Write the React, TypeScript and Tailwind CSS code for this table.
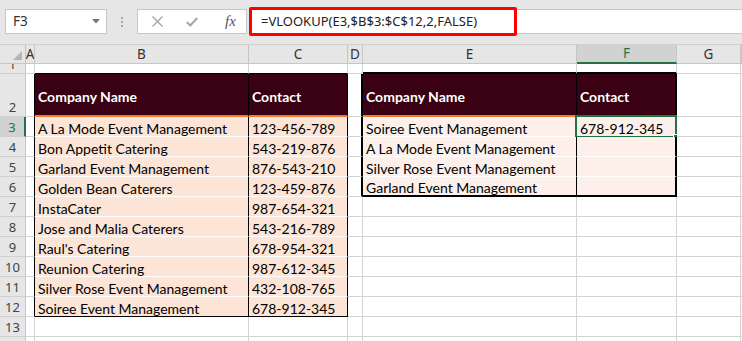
const left = [
  ['A La Mode Event Management', '123-456-789'],
  ['Bon Appetit Catering', '543-219-876'],
  ['Garland Event Management', '876-543-210'],
  ['Golden Bean Caterers', '123-459-876'],
  ['InstaCater', '987-654-321'],
  ['Jose and Malia Caterers', '543-216-789'],
  ["Raul's Catering", '678-954-321'],
  ['Reunion Catering', '987-612-345'],
  ['Silver Rose Event Management', '432-108-765'],
  ['Soiree Event Management', '678-912-345'],
];

const right = [
  ['Soiree Event Management', '678-912-345'],
  ['A La Mode Event Management', ''],
  ['Silver Rose Event Management', ''],
  ['Garland Event Management', ''],
];

const COLS = ['A', 'B', 'C', 'D', 'E', 'F', 'G', ''];
const GRID = 'grid grid-cols-[26px_9px_214px_99px_15px_214px_100px_64px_1fr]';
const cellFont = "font-['Lato',sans-serif] text-[14px]";
const uiFont = "font-['Noto_Sans',sans-serif]";

// border + fill for one cell, chosen by which table it falls in
function cellStyle(r: number, c: string): string {
  let right = 'border-r border-r-[#d4d4d4]';
  let bottom = 'border-b border-b-[#d4d4d4]';
  let bg = 'bg-white';
  const inL = r >= 2 && r <= 12;
  const inR = r >= 2 && r <= 6;
  if (c === 'A' && inL) right = 'border-r border-r-black';
  if ((c === 'B' || c === 'C') && r === 1) bottom = 'border-b border-b-black';
  if ((c === 'E' || c === 'F') && r === 1) bottom = 'border-b-2 border-b-black';
  if (c === 'D' && inR) right = 'border-r-2 border-r-black';
  if ((c === 'B' || c === 'C') && inL) {
    right = 'border-r border-r-black';
    bottom =
      r === 2 ? 'border-b-2 border-b-[#ed7d31]' : r === 12 ? 'border-b border-b-black' : 'border-b border-b-white';
    bg = r === 2 ? 'bg-[#3a0013]' : 'bg-[#fce4d6]';
  }
  if ((c === 'E' || c === 'F') && inR) {
    right = c === 'E' ? 'border-r border-r-black' : 'border-r-2 border-r-black';
    bottom =
      r === 2 ? 'border-b-2 border-b-[#ed7d31]' : r === 6 ? 'border-b-2 border-b-black' : 'border-b border-b-white';
    bg = r === 2 ? 'bg-[#3a0013]' : 'bg-[#fdf0ea]';
  }
  return `${right} ${bottom} ${bg}`;
}

function cellText(r: number, c: string): string {
  if (r === 2) {
    if (c === 'B' || c === 'E') return 'Company Name';
    if (c === 'C' || c === 'F') return 'Contact';
  }
  if (r >= 3 && r <= 12) {
    if (c === 'B') return left[r - 3][0];
    if (c === 'C') return left[r - 3][1];
  }
  if (r >= 3 && r <= 6) {
    if (c === 'E') return right[r - 3][0];
    if (c === 'F') return right[r - 3][1];
  }
  return '';
}

function Row({ r, h }: { r: number; h: string }) {
  const selected = r === 3;
  return (
    <div className={`${GRID} ${h}`}>
      <div
        className={`${uiFont} text-[13px] leading-[15px] flex items-end justify-center pb-[1px] overflow-hidden border-b border-b-[#d0d0d0] ${
          selected
            ? 'bg-[#d2d2d2] text-[#217346] border-r-2 border-r-[#217346]'
            : 'bg-[#e6e6e6] text-[#444] border-r border-r-[#c6c6c6]'
        }`}
      >
        {r < 14 ? r : ''}
      </div>
      {COLS.map((c) => {
        const text = cellText(r, c);
        const isHead = r === 2 && text !== '';
        return (
          <div
            key={c || 'rest'}
            className={`relative flex overflow-visible whitespace-nowrap px-[3px] ${cellFont} leading-[15px] ${
              isHead ? 'items-center pt-[3px] font-bold text-white' : 'items-end text-black'
            } ${cellStyle(r, c)}`}
          >
            {text}
            {r === 3 && c === 'F' && (
              <div className="absolute -left-[2px] -top-[2px] -right-[2px] -bottom-[2px] border-2 border-[#217346]">
                <div className="absolute -right-[4px] -bottom-[4px] w-[6px] h-[6px] bg-[#217346] border border-white" />
              </div>
            )}
          </div>
        );
      })}
    </div>
  );
}

function ColumnHeads() {
  return (
    <div className={`${GRID} h-[20px] border-t border-t-[#d0d0d0] ${uiFont} text-[13.5px] leading-[16px] text-[#333]`}>
      <div className="relative bg-[#e6e6e6] border-r border-r-[#c6c6c6] border-b border-b-[#c6c6c6]">
        <svg width="9" height="9" viewBox="0 0 9 9" className="absolute right-[3px] bottom-[3px]">
          <polygon points="9,0 9,9 0,9" fill="#b4b4b4" />
        </svg>
      </div>
      {COLS.map((c) =>
        c === 'F' ? (
          <div
            key="F"
            className="flex items-center justify-center pb-[1px] bg-[#d2d2d2] text-[#217346] border-r border-r-[#c6c6c6] border-b-2 border-b-[#217346]"
          >
            F
          </div>
        ) : (
          <div
            key={c || 'rest'}
            className="flex items-center justify-center pb-[1px] bg-[#e6e6e6] border-r border-r-[#c6c6c6] border-b border-b-[#c6c6c6] overflow-hidden"
          >
            {c}
          </div>
        ),
      )}
    </div>
  );
}

function FormulaBar() {
  return (
    <div className={`h-[44px] bg-[#e6e6e6] flex items-start pt-[9px] ${uiFont}`}>
      <div className="ml-[5px] w-[102px] h-[25px] bg-white border border-[#c6c6c6] flex items-center justify-between pl-[7px] pr-[6px] text-[13.5px] text-[#333]">
        <span>F3</span>
        <svg width="8" height="5" viewBox="0 0 8 5">
          <polygon points="0,0 8,0 4,4.5" fill="#777" />
        </svg>
      </div>
      <div className="w-[30px] h-[25px] flex flex-col items-center justify-center gap-[2px]">
        <span className="w-[2px] h-[2px] bg-[#a6a6a6]" />
        <span className="w-[2px] h-[2px] bg-[#a6a6a6]" />
        <span className="w-[2px] h-[2px] bg-[#a6a6a6]" />
      </div>
      <div className="w-[110px] h-[25px] bg-white border border-[#c6c6c6] flex items-center pl-[14px] gap-[23px]">
        <svg width="11" height="11" viewBox="0 0 11 11" stroke="#a6a6a6" strokeWidth="1.4" fill="none">
          <path d="M0.5 0.5 L10.5 10.5 M10.5 0.5 L0.5 10.5" />
        </svg>
        <svg width="12" height="10" viewBox="0 0 12 10" stroke="#a6a6a6" strokeWidth="2" fill="none">
          <path d="M0.8 5 L4.3 8.5 L11.2 1" />
        </svg>
        <span className="ml-[4px] font-['Liberation_Serif',serif] italic text-[15px] text-[#555] leading-none">
          fx
        </span>
      </div>
      <div className="relative ml-[3px] flex-1 h-[25px] bg-white border-y border-l border-[#c6c6c6]">
        <div className="absolute -left-[2px] -top-[3px] w-[268px] h-[29px] border-[3px] border-[#ff0000] rounded-[2px]" />
        <div className="pl-[10px] h-full flex items-center text-[13px] text-[#222]">
          =VLOOKUP(E3,$B$3:$C$12,2,FALSE)
        </div>
      </div>
    </div>
  );
}

export default function App() {
  const heights: Record<number, string> = { 1: 'h-[10px]', 2: 'h-[43px]' };
  return (
    <div className="w-[742px] h-[341px] overflow-hidden bg-white">
      <FormulaBar />
      <ColumnHeads />
      {Array.from({ length: 14 }, (_, i) => i + 1).map((r) => (
        <Row key={r} r={r} h={heights[r] ?? 'h-[20px]'} />
      ))}
    </div>
  );
}
